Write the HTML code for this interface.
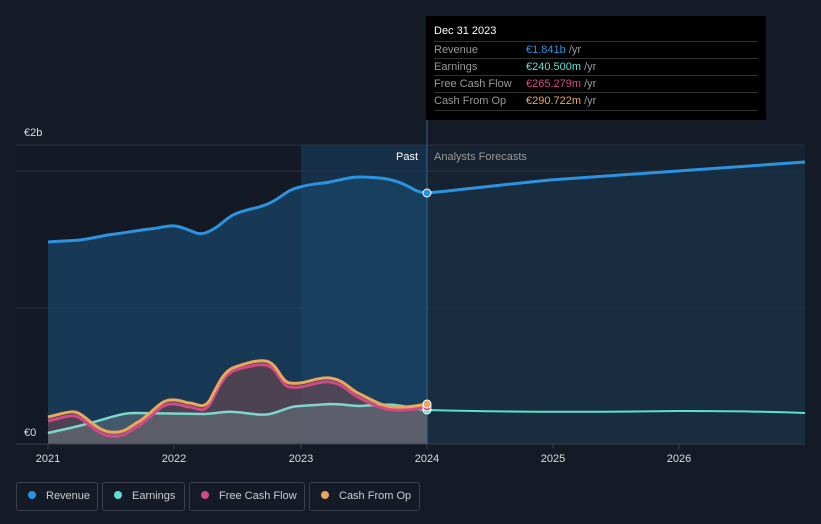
<!DOCTYPE html>
<html style="overflow:hidden"><head><style>
html,body{margin:0;width:821px;height:524px;overflow:hidden}
body{background:#151b26;font-family:"Liberation Sans",sans-serif;position:relative}
.tt{position:absolute;left:426px;top:16px;width:340px;height:104px;background:#000;color:#fff;font-size:11px}
.tt .h{position:absolute;left:8px;top:9px;font-size:11px}
.row{position:absolute;left:8px;width:324px;border-top:1px solid #333;height:17px;line-height:17px;color:#999}
.row span{position:absolute;left:92px}
.leg{position:absolute;top:482px;height:29px;border:1px solid #3a404c;border-radius:3px;color:#ccc;font-size:11px;line-height:27px;box-sizing:border-box;white-space:nowrap}
.leg i{display:inline-block;width:8px;height:8px;border-radius:50%;margin:0 10px 0 11px;vertical-align:0px}
</style></head><body>
<svg width="821" height="524" style="position:absolute;left:0;top:0">
<rect x="16" y="145" width="411" height="299" fill="#131a25"/>
<rect x="301" y="145" width="126" height="299" fill="#16304a"/>
<rect x="427" y="145" width="378" height="299" fill="#172230"/>
<line x1="16" y1="145" x2="805" y2="145" stroke="#2a313c"/>
<line x1="16" y1="171" x2="805" y2="171" stroke="#2a313c"/>
<line x1="16" y1="308" x2="805" y2="308" stroke="#2a313c"/>
<path d="M48,242 C60,241 70,241 80,240 C95,238 105,235 115,234 C130,232 140,230 150,229 C160,228 168,225 175,226 C190,228 195,236 205,233 C220,228 225,218 235,214 C250,208 255,209 265,205 C280,200 285,190 300,187 C315,183 320,184 330,182 C345,179 350,177 360,177 C375,177 385,178 395,181 C410,185 415,193 427,193 L427,444 L48,444Z" fill="#1b4466" opacity=".75"/>
<path d="M427,193 C460,190 480,187 550,180 C600,176 680,171 805,162 L805,444 L427,444Z" fill="#1a3247" opacity=".7"/>
<path d="M48,417 C60,414 70,411 75,412 C85,414 95,430 110,432 C125,434 130,426 140,421 C155,410 160,401 170,400 C180,399 185,403 190,403 C198,404 203,410 210,400 C220,380 225,370 235,367 C250,362 258,360 265,361 C278,362 280,382 290,383 C305,385 315,377 330,378 C345,380 350,390 360,394 C375,402 385,407 395,407 C410,408 420,405 427,404 L427,444 L48,444Z" fill="#7a4a50" opacity=".55"/>
<path d="M48,433 C70,428 80,426 90,423 C110,418 120,413 135,413 L205,414 C220,413 225,411 235,412 C250,413 260,416 270,414 C285,410 290,406 300,406 L330,404 C345,404 350,406 360,406 C375,405 390,404 395,405 C410,407 420,410 427,410 L427,444 L48,444Z" fill="#6a7a80" opacity=".5"/>
<path d="M48,242 C60,241 70,241 80,240 C95,238 105,235 115,234 C130,232 140,230 150,229 C160,228 168,225 175,226 C190,228 195,236 205,233 C220,228 225,218 235,214 C250,208 255,209 265,205 C280,200 285,190 300,187 C315,183 320,184 330,182 C345,179 350,177 360,177 C375,177 385,178 395,181 C410,185 415,193 427,193 C460,190 480,187 550,180 C600,176 680,171 805,162" fill="none" stroke="#2b94e0" stroke-width="3"/>
<path d="M427,410 C500,412 600,412 680,411 C740,411 780,412 805,413" fill="none" stroke="#5de0d0" stroke-width="2"/>
<path d="M48,433 C70,428 80,426 90,423 C110,418 120,413 135,413 L205,414 C220,413 225,411 235,412 C250,413 260,416 270,414 C285,410 290,406 300,406 L330,404 C345,404 350,406 360,406 C375,405 390,404 395,405 C410,407 420,410 427,410" fill="none" stroke="#7ed6cc" stroke-width="2.5"/>
<path d="M48,421 C60,418 70,415 75,416 C85,418 95,434 110,436 C125,438 130,430 140,425 C155,414 160,405 170,404 C180,403 185,407 190,407 C198,408 203,414 210,404 C220,384 225,374 235,370 C250,366 258,364 265,365 C278,366 280,386 290,387 C305,389 315,381 330,382 C345,384 350,394 360,398 C375,406 385,410 395,410 C410,411 420,408 427,407" fill="none" stroke="#d04a88" stroke-width="3"/>
<path d="M48,417 C60,414 70,411 75,412 C85,414 95,430 110,432 C125,434 130,426 140,421 C155,410 160,401 170,400 C180,399 185,403 190,403 C198,404 203,410 210,400 C220,380 225,370 235,367 C250,362 258,360 265,361 C278,362 280,382 290,383 C305,385 315,377 330,378 C345,380 350,390 360,394 C375,402 385,407 395,407 C410,408 420,405 427,404" fill="none" stroke="#eaa95a" stroke-width="3"/>
<line x1="427" y1="120" x2="427" y2="444" stroke="#2b6a90" stroke-width="1"/>
<circle cx="427" cy="193" r="4" fill="#2b94e0" stroke="#fff" stroke-width="1"/>
<circle cx="427" cy="410" r="4" fill="#5de0d0" stroke="#fff" stroke-width="1"/>
<circle cx="427" cy="407" r="4" fill="#d04a88" stroke="#fff" stroke-width="1"/>
<circle cx="427" cy="404" r="4" fill="#eaa95a" stroke="#fff" stroke-width="1"/>
<line x1="16" y1="444" x2="805" y2="444" stroke="#3a404c"/>
<g stroke="#3a404c"><line x1="48" y1="444" x2="48" y2="449"/><line x1="174" y1="444" x2="174" y2="449"/><line x1="301" y1="444" x2="301" y2="449"/><line x1="427" y1="444" x2="427" y2="449"/><line x1="553" y1="444" x2="553" y2="449"/><line x1="679" y1="444" x2="679" y2="449"/></g>
<g fill="#ddd" font-size="11" font-family="Liberation Sans" text-anchor="middle"><text x="48" y="462">2021</text><text x="174" y="462">2022</text><text x="301" y="462">2023</text><text x="427" y="462">2024</text><text x="553" y="462">2025</text><text x="679" y="462">2026</text></g>
<text x="24" y="136" fill="#ddd" font-size="11">€2b</text>
<text x="24" y="436" fill="#ddd" font-size="11">€0</text>
<text x="418" y="160" fill="#fff" font-size="11" text-anchor="end">Past</text>
<text x="434" y="160" fill="#999" font-size="11">Analysts Forecasts</text>
</svg>
<div class="tt"><div class="h">Dec 31 2023</div>
<div class="row" style="top:25px">Revenue<span><b style="font-weight:normal;color:#2b94e0">€1.841b</b> /yr</span></div>
<div class="row" style="top:42px">Earnings<span><b style="font-weight:normal;color:#5de0d0">€240.500m</b> /yr</span></div>
<div class="row" style="top:59px">Free Cash Flow<span><b style="font-weight:normal;color:#d04a88">€265.279m</b> /yr</span></div>
<div class="row" style="top:76px;border-bottom:1px solid #333">Cash From Op<span><b style="font-weight:normal;color:#eaa95a">€290.722m</b> /yr</span></div>
</div>
<div class="leg" style="left:16px;width:82px"><i style="background:#2b94e0"></i>Revenue</div>
<div class="leg" style="left:102px;width:83px"><i style="background:#5de0d0"></i>Earnings</div>
<div class="leg" style="left:189px;width:116px"><i style="background:#d04a88"></i>Free Cash Flow</div>
<div class="leg" style="left:309px;width:111px"><i style="background:#eaa95a"></i>Cash From Op</div>
</body></html>
